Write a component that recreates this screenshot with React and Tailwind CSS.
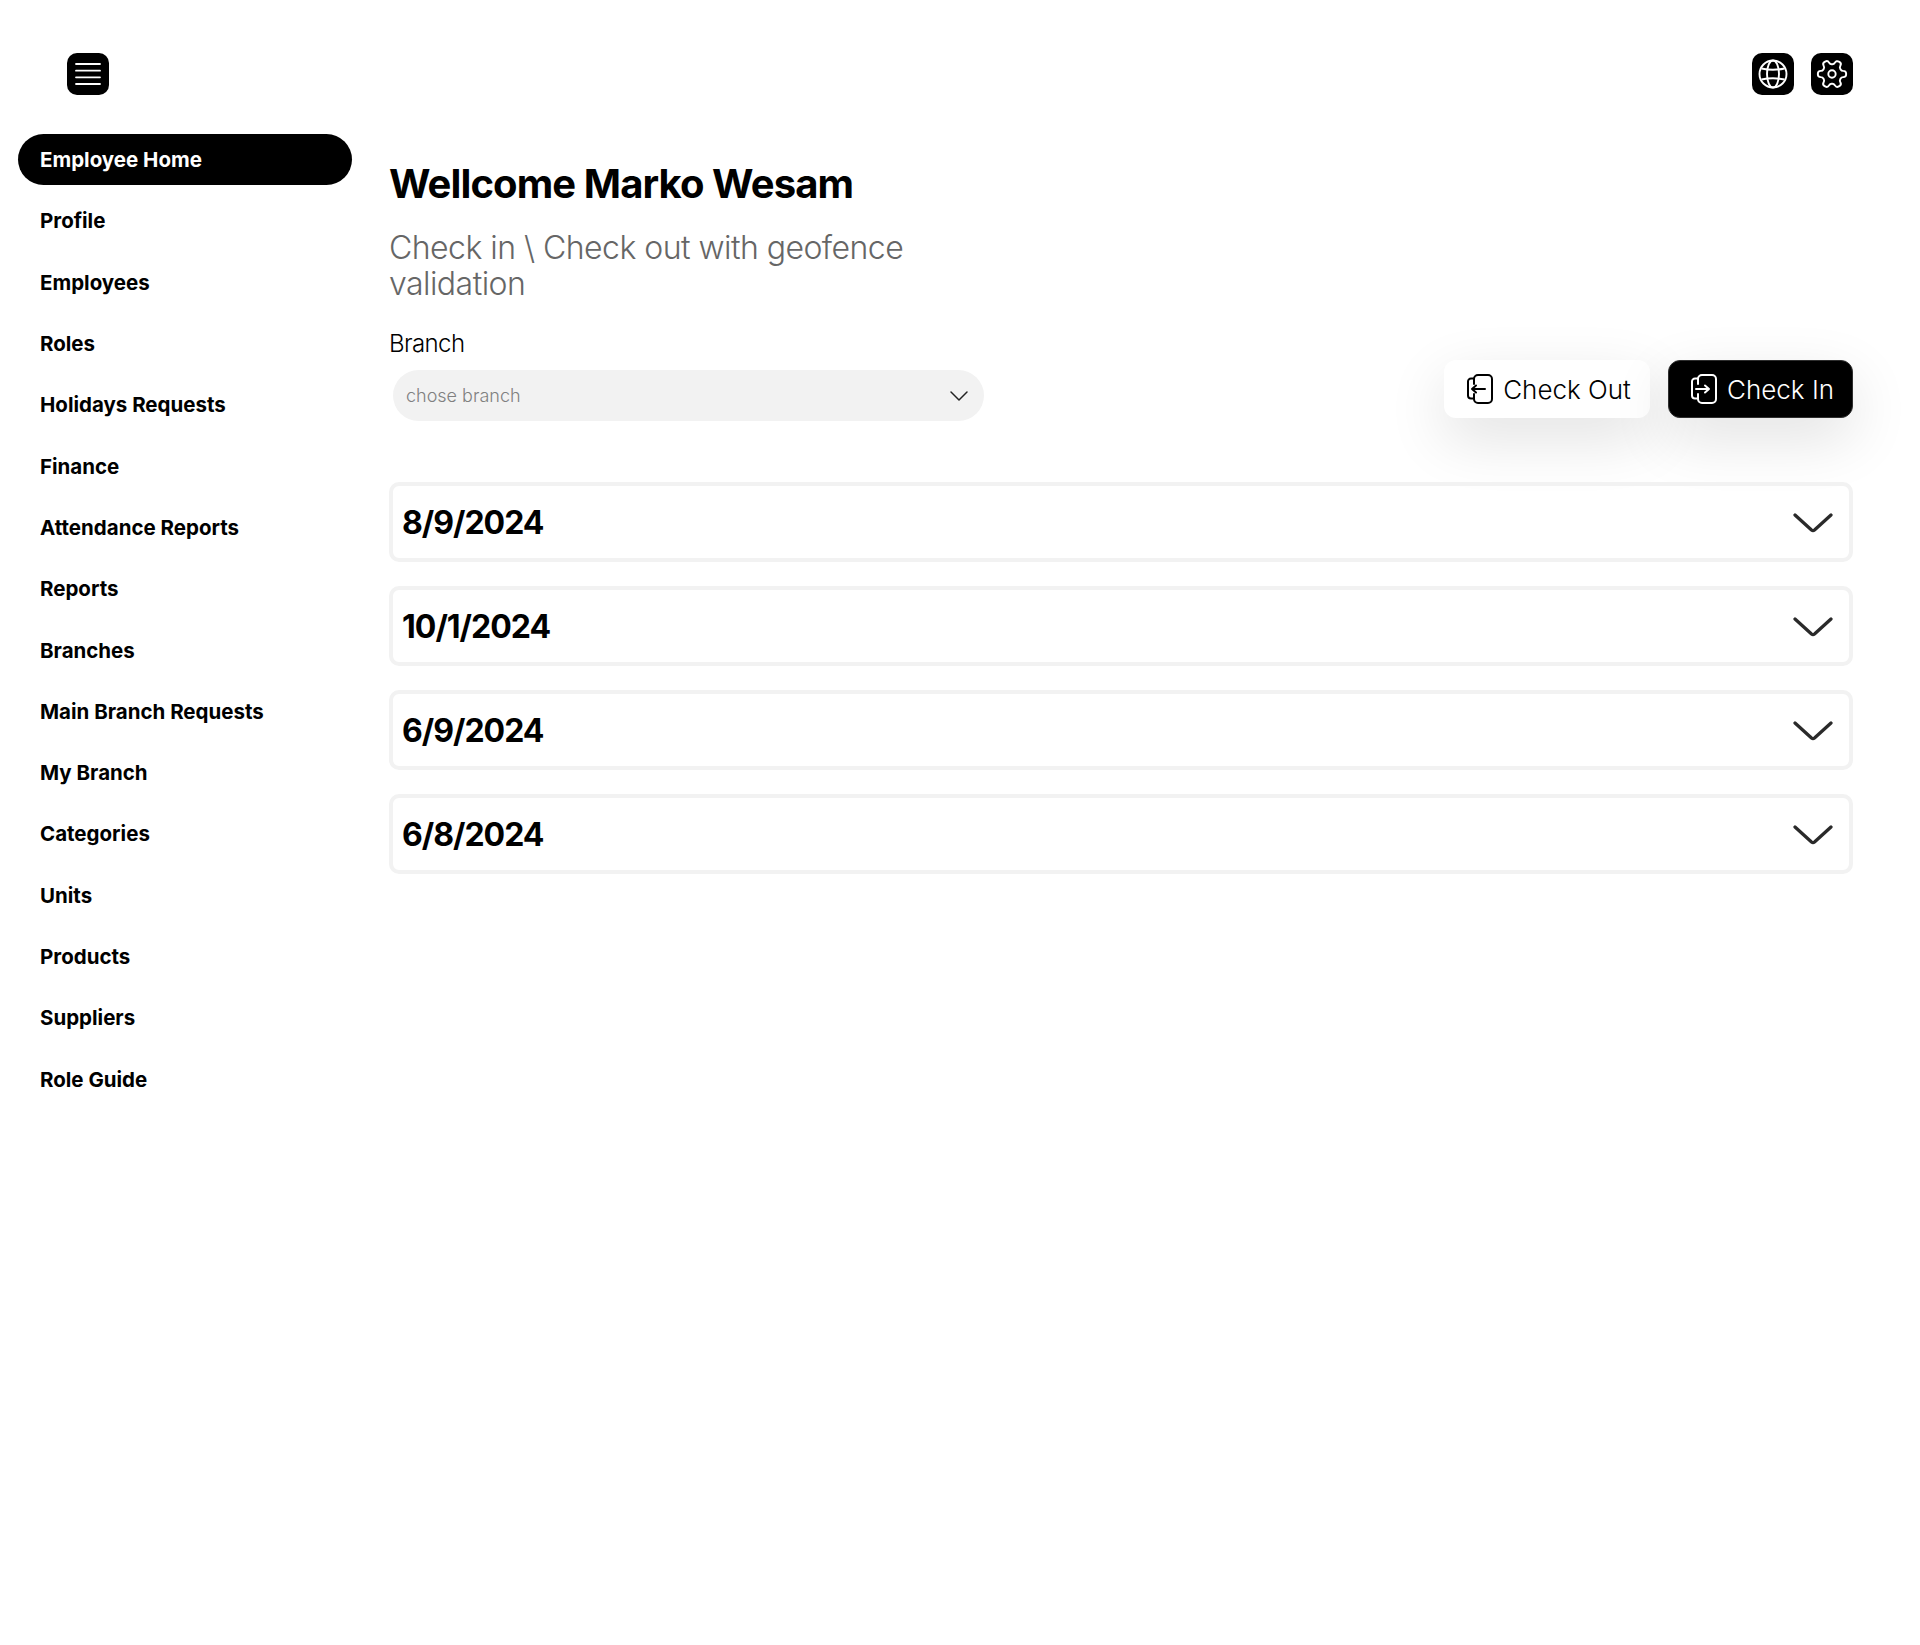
import React from 'react';

const navItems = ['Employee Home', 'Profile', 'Employees', 'Roles', 'Holidays Requests', 'Finance', 'Attendance Reports', 'Reports', 'Branches', 'Main Branch Requests', 'My Branch', 'Categories', 'Units', 'Products', 'Suppliers', 'Role Guide'];
const dates = ['8/9/2024', '10/1/2024', '6/9/2024', '6/8/2024'];

const IconButton = ({ children }) => (
    <button className="w-[42px] h-[42px] bg-black rounded-[10px] flex items-center justify-center text-white">{children}</button>
);

const DoorIcon = ({ out }) => (
    <svg width="26" height="30" viewBox="0 0 26 30" fill="none" stroke="currentColor" strokeWidth="2" strokeLinecap="round" strokeLinejoin="round">
        <path d="M7 4.500H4a3 3 0 0 0-3 3v14a3 3 0 0 0 3 3h3" />
        <path d="M7 10V5a4 4 0 0 1 4-4h10a4 4 0 0 1 4 4v20a4 4 0 0 1-4 4H11a4 4 0 0 1-4-4v-5" />
        {out ? <path d="M18 15H5M9 11.500 5 15l4 3.500" /> : <path d="M5 15h13M14 11.500l4 3.500-4 3.500" />}
    </svg>
);

const App = () => {
    return (
        <div className="w-full min-h-[1645px] bg-white text-black font-['Inter',sans-serif]">
            <header className="flex items-center justify-between pt-[53px] pl-[67px] pr-[67px]">
                <IconButton>
                    <svg width="26" height="22" viewBox="0 0 26 22" fill="none" stroke="currentColor" strokeWidth="1.8" strokeLinecap="round">
                        <path d="M1 1h24M1 7.670h24M1 14.330h24M1 21h24" />
                    </svg>
                </IconButton>
                <div className="flex gap-[17px]">
                    <IconButton>
                        <svg width="30" height="30" viewBox="0 0 30 30" fill="none" stroke="currentColor" strokeWidth="1.9">
                            <circle cx="15" cy="15" r="13.5" />
                            <ellipse cx="15" cy="15" rx="6" ry="13.5" />
                            <path d="M3.500 9.500c7 1.600 16 1.600 23 0M3.500 20.500c7-1.600 16-1.600 23 0" />
                        </svg>
                    </IconButton>
                    <IconButton>
                        <svg width="34" height="34" viewBox="0 0 24 24" fill="none" stroke="currentColor" strokeWidth="1.35" strokeLinecap="round" strokeLinejoin="round">
                            <path transform="rotate(30 12 12)" d="M12.22 2h-.44a2 2 0 0 0-2 2v.18a2 2 0 0 1-1 1.73l-.43.25a2 2 0 0 1-2 0l-.15-.08a2 2 0 0 0-2.73.73l-.22.38a2 2 0 0 0 .73 2.73l.15.1a2 2 0 0 1 1 1.72v.51a2 2 0 0 1-1 1.74l-.15.09a2 2 0 0 0-.73 2.73l.22.38a2 2 0 0 0 2.73.73l.15-.08a2 2 0 0 1 2 0l.43.25a2 2 0 0 1 1 1.73V20a2 2 0 0 0 2 2h.44a2 2 0 0 0 2-2v-.18a2 2 0 0 1 1-1.73l.43-.25a2 2 0 0 1 2 0l.15.08a2 2 0 0 0 2.73-.73l.22-.39a2 2 0 0 0-.73-2.73l-.15-.08a2 2 0 0 1-1-1.74v-.5a2 2 0 0 1 1-1.74l.15-.09a2 2 0 0 0 .73-2.73l-.22-.38a2 2 0 0 0-2.73-.73l-.15.08a2 2 0 0 1-2 0l-.43-.25a2 2 0 0 1-1-1.73V4a2 2 0 0 0-2-2z" />
                            <circle cx="12" cy="12" r="2.600" />
                        </svg>
                    </IconButton>
                </div>
            </header>

            <div className="flex mt-[39px]">
                <nav className="w-[334px] ml-[18px] shrink-0 flex flex-col gap-[10.3px]">
                    {navItems.map((item, i) => (
                        <a key={item} className={`h-[51px] flex items-center pl-[22px] pt-[2px] rounded-full text-[20.5px] font-bold ${i === 0 ? 'bg-black text-white' : 'text-black'}`}>
                            {item}
                        </a>
                    ))}
                </nav>

                <main className="flex-1 ml-[37px] mr-[67px] pt-[25px]">
                    <h1 className="text-[40px] leading-[50px] font-bold tracking-[-0.9px]">Wellcome Marko Wesam</h1>
                    <div className="flex items-end justify-between">
                        <div>
                            <p className="mt-[21px] w-[560px] text-[32px] leading-[36px] text-[#666666] font-light tracking-[-0.54px]">Check in \ Check out with geofence validation</p>
                            <label className="block mt-[27px] text-[24px] leading-[30px] font-light tracking-[-0.6px]">Branch</label>
                            <div className="mt-[11px] ml-[4px] w-[591px] h-[51px] bg-[#f2f2f2] rounded-full flex items-center justify-between pl-[13px] pr-[15px]">
                                <span className="text-[18px] text-[#808080] font-light">chose branch</span>
                                <svg width="20" height="12" viewBox="0 0 20 12" fill="none" stroke="#222222" strokeWidth="1.500" strokeLinecap="round" strokeLinejoin="round">
                                    <path d="M2 2l8 8 8-8" />
                                </svg>
                            </div>
                        </div>
                        <div className="flex gap-[18px] mb-[3px]">
                            <button className="w-[206px] h-[58px] pl-[4px] bg-white rounded-[12px] flex items-center justify-center gap-[10px] text-[26px] font-light shadow-[0_20px_60px_rgba(0,0,0,0.12)]">
                                <DoorIcon out />
                                Check Out
                            </button>
                            <button className="w-[185px] h-[58px] pl-[4px] bg-black text-white border border-[#2e2e2e] rounded-[12px] flex items-center justify-center gap-[10px] text-[26px] font-light shadow-[0_20px_60px_rgba(0,0,0,0.12)]">
                                <DoorIcon />
                                Check In
                            </button>
                        </div>
                    </div>

                    <div className="mt-[61px] flex flex-col gap-[24px]">
                        {dates.map(date => (
                            <div key={date} className="h-[80px] pt-[1px] border-[4px] border-[#f2f2f2] rounded-[10px] flex items-center justify-between pl-[9px] pr-[16px]">
                                <span className="text-[32px] font-bold tracking-[-1px]">{date}</span>
                                <svg width="40" height="20" viewBox="0 0 40 20" fill="none" stroke="#2a2a2a" strokeWidth="3.300" strokeLinecap="round" strokeLinejoin="round">
                                    <path d="M2 2l16.500 15q1.500 1.200 3 0L38 2" />
                                </svg>
                            </div>
                        ))}
                    </div>
                </main>
            </div>
        </div>
    );
};

export default App;
